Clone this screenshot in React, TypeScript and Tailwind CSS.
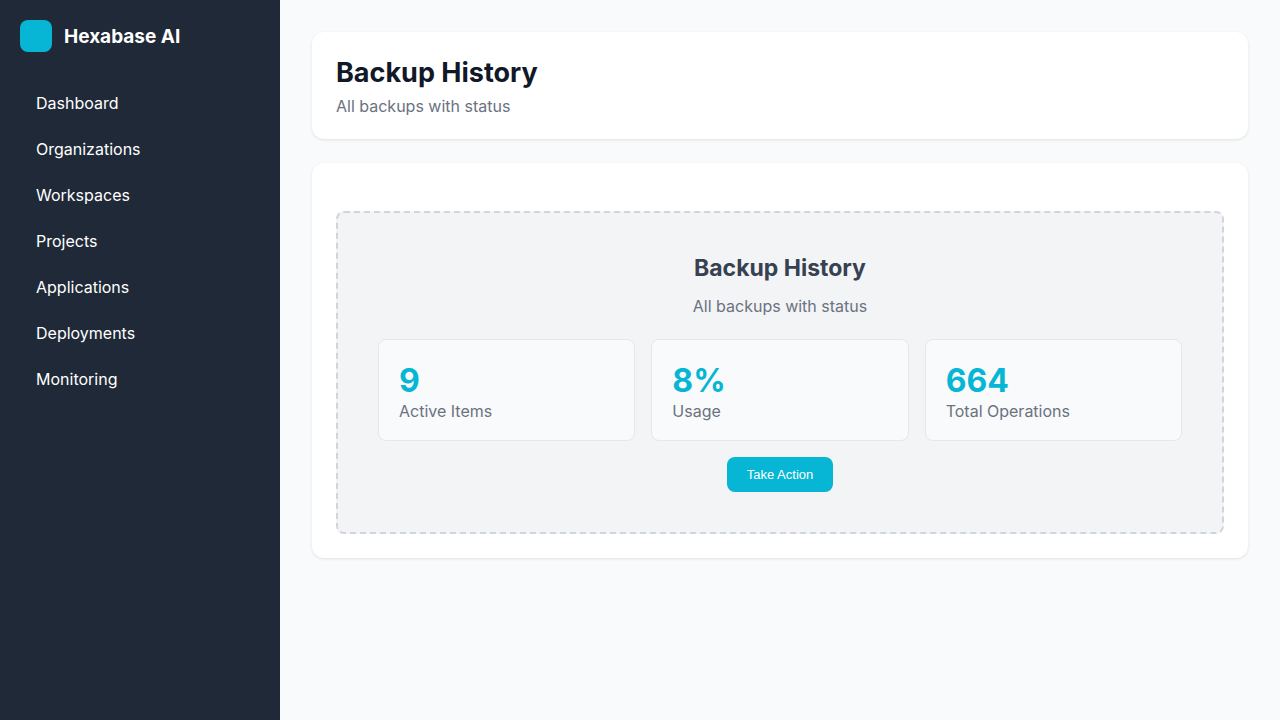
const navItems = [
  'Dashboard',
  'Organizations',
  'Workspaces',
  'Projects',
  'Applications',
  'Deployments',
  'Monitoring',
];

const stats = [
  { value: '9', label: 'Active Items' },
  { value: '8%', label: 'Usage' },
  { value: '664', label: 'Total Operations' },
];

function Sidebar() {
  return (
    <aside className="w-[280px] shrink-0 bg-[#1f2937] p-5 text-white">
      <div className="mb-7 flex items-start gap-3">
        <div className="size-8 rounded-lg bg-[#06b6d4]" />
        <span className="text-[19px] leading-[34px] font-bold">Hexabase AI</span>
      </div>
      <nav>
        <ul className="flex flex-col gap-1">
          {navItems.map((item) => (
            <li key={item}>
              <a href="#" className="block rounded-lg px-4 py-3 text-base leading-[18px]">
                {item}
              </a>
            </li>
          ))}
        </ul>
      </nav>
    </aside>
  );
}

function StatCard({ value, label }: { value: string; label: string }) {
  return (
    <div className="rounded-lg border border-[#e5e7eb] bg-[#f9fafb] p-5 text-left">
      <div className="text-[32px] leading-[42px] font-bold text-[#06b6d4]">{value}</div>
      <div className="text-base leading-[18px] text-[#6b7280]">{label}</div>
    </div>
  );
}

export default function App() {
  return (
    <div className="flex min-h-screen bg-[#f9fafb] font-['Inter',sans-serif]">
      <Sidebar />
      <main className="min-w-0 flex-1 p-8">
        <header className="mb-6 rounded-xl bg-white p-6 shadow-[0_1px_3px_rgba(0,0,0,0.1)]">
          <h1 className="mb-[7px] text-[27px] leading-[34px] font-bold text-[#111827]">Backup History</h1>
          <p className="text-base leading-[18px] text-[#6b7280]">All backups with status</p>
        </header>
        <section className="rounded-xl bg-white p-6 shadow-[0_1px_3px_rgba(0,0,0,0.1)]">
          <div className="mt-6 rounded-lg border-2 border-dashed border-[#d1d5db] bg-[#f3f4f6] p-10 text-center">
            <h2 className="mb-3.5 text-[23px] leading-[30px] font-bold text-[#374151]">Backup History</h2>
            <p className="mb-6 text-base leading-[18px] text-[#6b7280]">All backups with status</p>
            <div className="mb-4 grid grid-cols-3 gap-4">
              {stats.map((stat) => (
                <StatCard key={stat.label} value={stat.value} label={stat.label} />
              ))}
            </div>
            <button
              type="button"
              className="block mx-auto rounded-lg bg-[#06b6d4] px-5 py-2.5 font-['Liberation_Sans',sans-serif] text-[13px] leading-[15px] text-white"
            >
              Take Action
            </button>
          </div>
        </section>
      </main>
    </div>
  );
}
